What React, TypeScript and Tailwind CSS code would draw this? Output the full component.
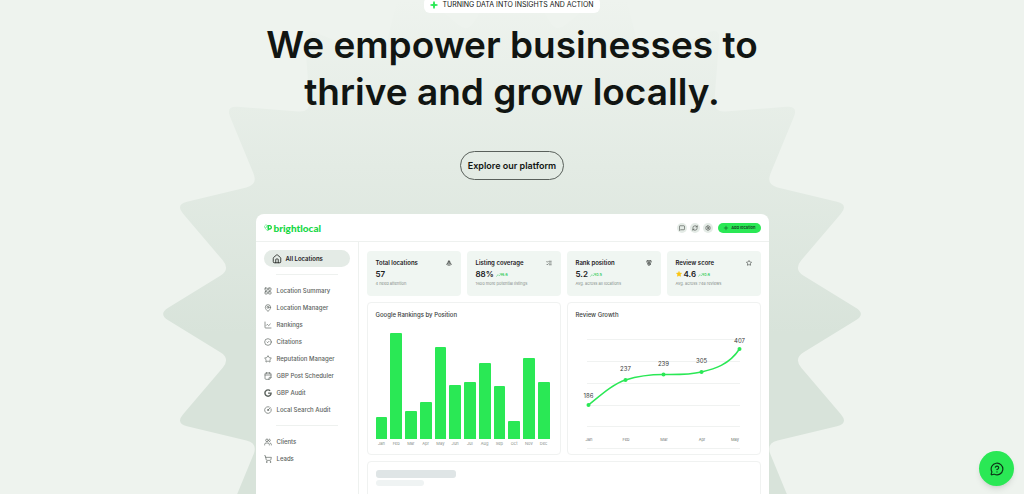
import {
  ChartLine,
  CircleCheck,
  CircleGauge,
  House,
  LayoutGrid,
  ListChecks,
  MapPin,
  Medal,
  MessageCircleQuestionMark,
  MessageSquare,
  Plus,
  RefreshCw,
  Settings,
  ShoppingCart,
  Star,
  TrafficCone,
  TrendingUp,
  Users,
} from 'lucide-react';
import type { ComponentType } from 'react';
import { FaGoogle } from 'react-icons/fa';

type IconType = ComponentType<{ className?: string }>;

// note page with binder rings on top
const SchedulerIcon = ({ className }: { className?: string }) => (
  <svg
    className={className}
    viewBox="0 0 24 24"
    fill="none"
    stroke="currentColor"
    strokeWidth="2"
    strokeLinecap="round"
    strokeLinejoin="round"
    aria-hidden="true"
  >
    <path d="M15 22H6a3 3 0 0 1-3-3V6a3 3 0 0 1 3-3h12a3 3 0 0 1 3 3v10zM15 22v-4a2 2 0 0 1 2-2h4M3 9h18M8 1v4M16 1v4" />
  </svg>
);

const MAIN_NAV: { label: string; icon: IconType }[] = [
  { label: 'Location Summary', icon: LayoutGrid },
  { label: 'Location Manager', icon: MapPin },
  { label: 'Rankings', icon: ChartLine },
  { label: 'Citations', icon: CircleCheck },
  { label: 'Reputation Manager', icon: Star },
  { label: 'GBP Post Scheduler', icon: SchedulerIcon },
  { label: 'GBP Audit', icon: FaGoogle },
  { label: 'Local Search Audit', icon: CircleGauge },
];

const SUB_NAV: { label: string; icon: IconType }[] = [
  { label: 'Clients', icon: Users },
  { label: 'Leads', icon: ShoppingCart },
];

const STATS: {
  title: string;
  value: string;
  trend?: string;
  note: string;
  icon: IconType;
  starred?: boolean;
}[] = [
  { title: 'Total locations', value: '57', note: '4 need attention', icon: TrafficCone },
  {
    title: 'Listing coverage',
    value: '88%',
    trend: '6.6',
    note: '1600 more potential listings',
    icon: ListChecks,
  },
  {
    title: 'Rank position',
    value: '5.2',
    trend: '0.5',
    note: 'Avg. across all locations',
    icon: Medal,
  },
  {
    title: 'Review score',
    value: '4.6',
    trend: '0.6',
    note: 'Avg. across 748 reviews',
    icon: Star,
    starred: true,
  },
];

const RANKINGS = [
  { month: 'Jan', value: 22 },
  { month: 'Feb', value: 106 },
  { month: 'Mar', value: 28 },
  { month: 'Apr', value: 37 },
  { month: 'May', value: 92 },
  { month: 'Jun', value: 54 },
  { month: 'Jul', value: 57 },
  { month: 'Aug', value: 76 },
  { month: 'Sep', value: 53 },
  { month: 'Oct', value: 18 },
  { month: 'Nov', value: 81 },
  { month: 'Dec', value: 57 },
];

const REVIEWS = [
  { month: 'Jan', value: 186, x: 12.5, y: 79, labelY: 72, monthX: 13 },
  { month: 'Feb', value: 237, x: 49.5, y: 54, labelY: 45, monthX: 50 },
  { month: 'Mar', value: 239, x: 87.5, y: 48.5, labelY: 40, monthX: 88 },
  { month: 'Apr', value: 305, x: 125.5, y: 46, labelY: 37, monthX: 126 },
  { month: 'May', value: 407, x: 163.5, y: 23, labelY: 17, monthX: 159 },
];

const GRID_LINES = [13.5, 35.5, 57.5, 79.5, 100.5, 122.5];

// rounded star: outer and inner corners alternate around the centre
const starPath = (points: number, outer: number, inner: number, round: number) => {
  const corners = Array.from({ length: points * 2 }, (_, i) => {
    const angle = (Math.PI * i) / points;
    const r = i % 2 === 0 ? outer : inner;
    return [r * Math.cos(angle), r * Math.sin(angle)];
  });
  const towards = (from: number[], to: number[]) => {
    const dx = to[0] - from[0];
    const dy = to[1] - from[1];
    const len = Math.hypot(dx, dy);
    return [from[0] + (dx / len) * round, from[1] + (dy / len) * round];
  };
  return (
    corners
      .map((c, i) => {
        const a = towards(c, corners[(i + corners.length - 1) % corners.length]);
        const b = towards(c, corners[(i + 1) % corners.length]);
        return `${i === 0 ? 'M' : 'L'}${a[0]} ${a[1]}Q${c[0]} ${c[1]} ${b[0]} ${b[1]}`;
      })
      .join('') + 'Z'
  );
};

const Starburst = () => (
  <svg
    className="absolute left-1/2 top-[-46px] size-[720px] -translate-x-1/2"
    viewBox="-360 -360 720 720"
    aria-hidden="true"
  >
    <defs>
      <linearGradient id="burst" gradientUnits="userSpaceOnUse" x1="0" y1="-314" x2="0" y2="20">
        <stop offset="0" stopColor="#d8e3da" stopOpacity="0" />
        <stop offset="1" stopColor="#d8e3da" />
      </linearGradient>
    </defs>
    <path d={starPath(20, 354, 285, 12)} fill="url(#burst)" />
  </svg>
);

const Logo = () => (
  <a href="#" className="flex items-center gap-0.5 text-[#18d846]">
    <svg className="size-2" viewBox="0 0 24 24" aria-hidden="true">
      <path
        d="M10 20 3 12C0 8 2 3 6 3c2 0 3 1 4 2"
        fill="none"
        stroke="currentColor"
        strokeWidth="2"
        strokeDasharray="2 1"
      />
      <path d="M6 12c-1-2 0-4 3-4" fill="none" stroke="currentColor" strokeWidth="2" />
      <path
        fillRule="evenodd"
        d="M10 3h7c4 0 7 3 7 7s-3 7-7 7h-2l-4 5zM15 7v6h2c4 0 4-6 0-6z"
        fill="currentColor"
      />
    </svg>
    <span className="font-['Lato',sans-serif] text-[10px] leading-3 font-black">brightlocal</span>
  </a>
);

const NavList = ({ items }: { items: typeof MAIN_NAV }) => (
  <ul>
    {items.map(({ label, icon: Icon }) => (
      <li key={label}>
        <a
          href="#"
          className="flex h-[17px] items-center gap-[5px] text-[6px] font-medium text-[#5b625d]"
        >
          <Icon className="size-2" />
          {label}
        </a>
      </li>
    ))}
  </ul>
);

const Sidebar = () => (
  <nav className="w-[103px] shrink-0 border-r border-[#eef1ef] px-2 pt-2">
    <a
      href="#"
      className="flex h-[17px] items-center gap-1 rounded-full bg-[#e4ebe6] px-2 text-[6px] font-semibold text-[#1d211e]"
    >
      <House className="size-2.5" />
      All Locations
    </a>
    <hr className="mx-3 my-[7px] border-[#eef1ef]" />
    <NavList items={MAIN_NAV} />
    <hr className="mx-3 my-[7px] border-[#eef1ef]" />
    <NavList items={SUB_NAV} />
  </nav>
);

const StatCard = ({ title, value, trend, note, icon: Icon, starred }: (typeof STATS)[number]) => (
  <div className="h-[45px] rounded bg-[#f0f6f2] px-[9px] pt-2">
    <div className="flex items-center justify-between text-[#1d211e]">
      <h3 className="text-[6px] leading-2 font-semibold">{title}</h3>
      <Icon className="size-1.5" />
    </div>
    <div className="mt-px flex items-center gap-0.5">
      {starred && <Star className="size-1.5 fill-[#fbc412] text-[#fbc412]" />}
      <span className="text-[8px] leading-3 font-semibold text-[#1d211e]">{value}</span>
      {trend && (
        <span className="flex items-center pt-0.5 text-[4px] leading-1 font-medium text-[#2bc95a]">
          <TrendingUp className="size-1.5" />
          {trend}
        </span>
      )}
    </div>
    <p className="mt-px text-[4px] leading-1.5 text-[#858c87]">{note}</p>
  </div>
);

const RankingsChart = () => (
  <section className="h-[153px] rounded border border-[#f0f2f1] pt-2 pr-2.5 pl-2">
    <h3 className="text-[6px] leading-2 font-medium text-[#3a403c]">Google Rankings by Position</h3>
    <div className="mt-3.5 flex h-[106px] items-end gap-[3px]">
      {RANKINGS.map(({ month, value }) => (
        <div key={month} className="flex-1 rounded-t-[1px] bg-[#2ae855]" style={{ height: value }} />
      ))}
    </div>
    <div className="mt-0.5 flex gap-[3px]">
      {RANKINGS.map(({ month }) => (
        <span key={month} className="flex-1 text-center text-[4px] leading-1.5 text-[#858c87]">
          {month}
        </span>
      ))}
    </div>
  </section>
);

const ReviewChart = () => (
  <section className="h-[153px] rounded border border-[#f0f2f1] px-2 pt-2">
    <h3 className="text-[6px] leading-2 font-medium text-[#3a403c]">Review Growth</h3>
    <svg className="mt-[7px] w-full" viewBox="0 0 176 126" role="img" aria-label="Review growth">
      {GRID_LINES.map((y) => (
        <path key={y} d={`M11 ${y}H164`} stroke="#f0f2f1" />
      ))}
      <path
        d="M12.5 79C25 69 37 58 49.5 54S75 48.5 87.5 48.5S113 49 125.5 46S153 39 163.5 23"
        fill="none"
        stroke="#2ae855"
        strokeWidth="1.5"
      />
      {REVIEWS.map(({ month, value, x, y, labelY, monthX }) => (
        <g key={month} textAnchor="middle">
          <circle cx={x} cy={y} r="2" fill="#2ae855" />
          <text x={x} y={labelY} className="fill-[#3a403c] text-[6px]">
            {value}
          </text>
          <text x={monthX} y="115" className="fill-[#6f7671] text-[4px]">
            {month}
          </text>
        </g>
      ))}
    </svg>
  </section>
);

const Dashboard = () => (
  <div className="w-full max-w-[513px] overflow-hidden rounded-t-lg bg-white">
    <header className="flex h-7 items-center justify-between border-b border-[#eef1ef] px-2">
      <Logo />
      <div className="flex items-center gap-[3px]">
        {[
          { label: 'Messages', icon: MessageSquare },
          { label: 'Refresh', icon: RefreshCw },
          { label: 'Settings', icon: Settings },
        ].map(({ label, icon: Icon }) => (
          <button
            key={label}
            type="button"
            aria-label={label}
            className="flex size-2.5 items-center justify-center rounded-full bg-[#e4ebe6] text-[#2c312d]"
          >
            <Icon className="size-1.5" />
          </button>
        ))}
        <button
          type="button"
          className="ml-0.5 flex h-2.5 items-center gap-0.5 rounded-full bg-[#2ae855] px-[5px] text-[4px] font-semibold text-[#123a1c]"
        >
          <Plus className="size-1.5" />
          Add location
        </button>
      </div>
    </header>
    <div className="flex">
      <Sidebar />
      <main className="flex min-w-0 flex-1 flex-col gap-1.5 px-2 pt-[9px]">
        <div className="grid grid-cols-4 gap-1.5">
          {STATS.map((stat) => (
            <StatCard key={stat.title} {...stat} />
          ))}
        </div>
        <div className="grid grid-cols-2 gap-1.5">
          <RankingsChart />
          <ReviewChart />
        </div>
        <div className="h-20 rounded border border-[#f0f2f1] px-2 pt-2">
          <div className="h-2 w-20 rounded-[3px] bg-[#dfe5e6]" />
          <div className="mt-0.5 h-1.5 w-12 rounded-[3px] bg-[#eff3f3]" />
        </div>
      </main>
    </div>
  </div>
);

const App = () => {
  return (
    <div className="relative flex h-screen flex-col items-center overflow-hidden border-b-2 border-white bg-[#eef3ee] font-['Inter',sans-serif] text-[#111512]">
      <Starburst />
      <div className="relative flex w-full flex-col items-center">
        <p className="-mt-[3px] flex h-4 items-center gap-1 rounded-md bg-white px-1.5 text-[7px]">
          <svg className="size-2 text-[#2ae855]" viewBox="0 0 8 8" aria-hidden="true">
            <path d="M4 .5V7.5M.5 4H7.5" stroke="currentColor" strokeWidth="1.6" />
            <path d="M4 1 5 3 7 4 5 5 4 7 3 5 1 4 3 3z" fill="currentColor" />
          </svg>
          TURNING DATA INTO INSIGHTS AND ACTION
        </p>
        <h1 className="mt-2 text-center text-[37px] leading-[47px] font-semibold">
          We empower businesses to
          <br />
          thrive and grow locally.
        </h1>
        <button
          type="button"
          className="mt-9 mb-[34px] h-[29px] rounded-full border border-[#59605b] px-[7px] text-[9px] font-semibold"
        >
          Explore our platform
        </button>
        <Dashboard />
      </div>
      <button
        type="button"
        aria-label="Help"
        className="fixed right-2.5 bottom-2.5 flex size-[35px] items-center justify-center rounded-full bg-[#2ae855] text-[#0d3317] shadow-md"
      >
        <MessageCircleQuestionMark className="size-3.5" />
      </button>
    </div>
  );
};

export default App;
